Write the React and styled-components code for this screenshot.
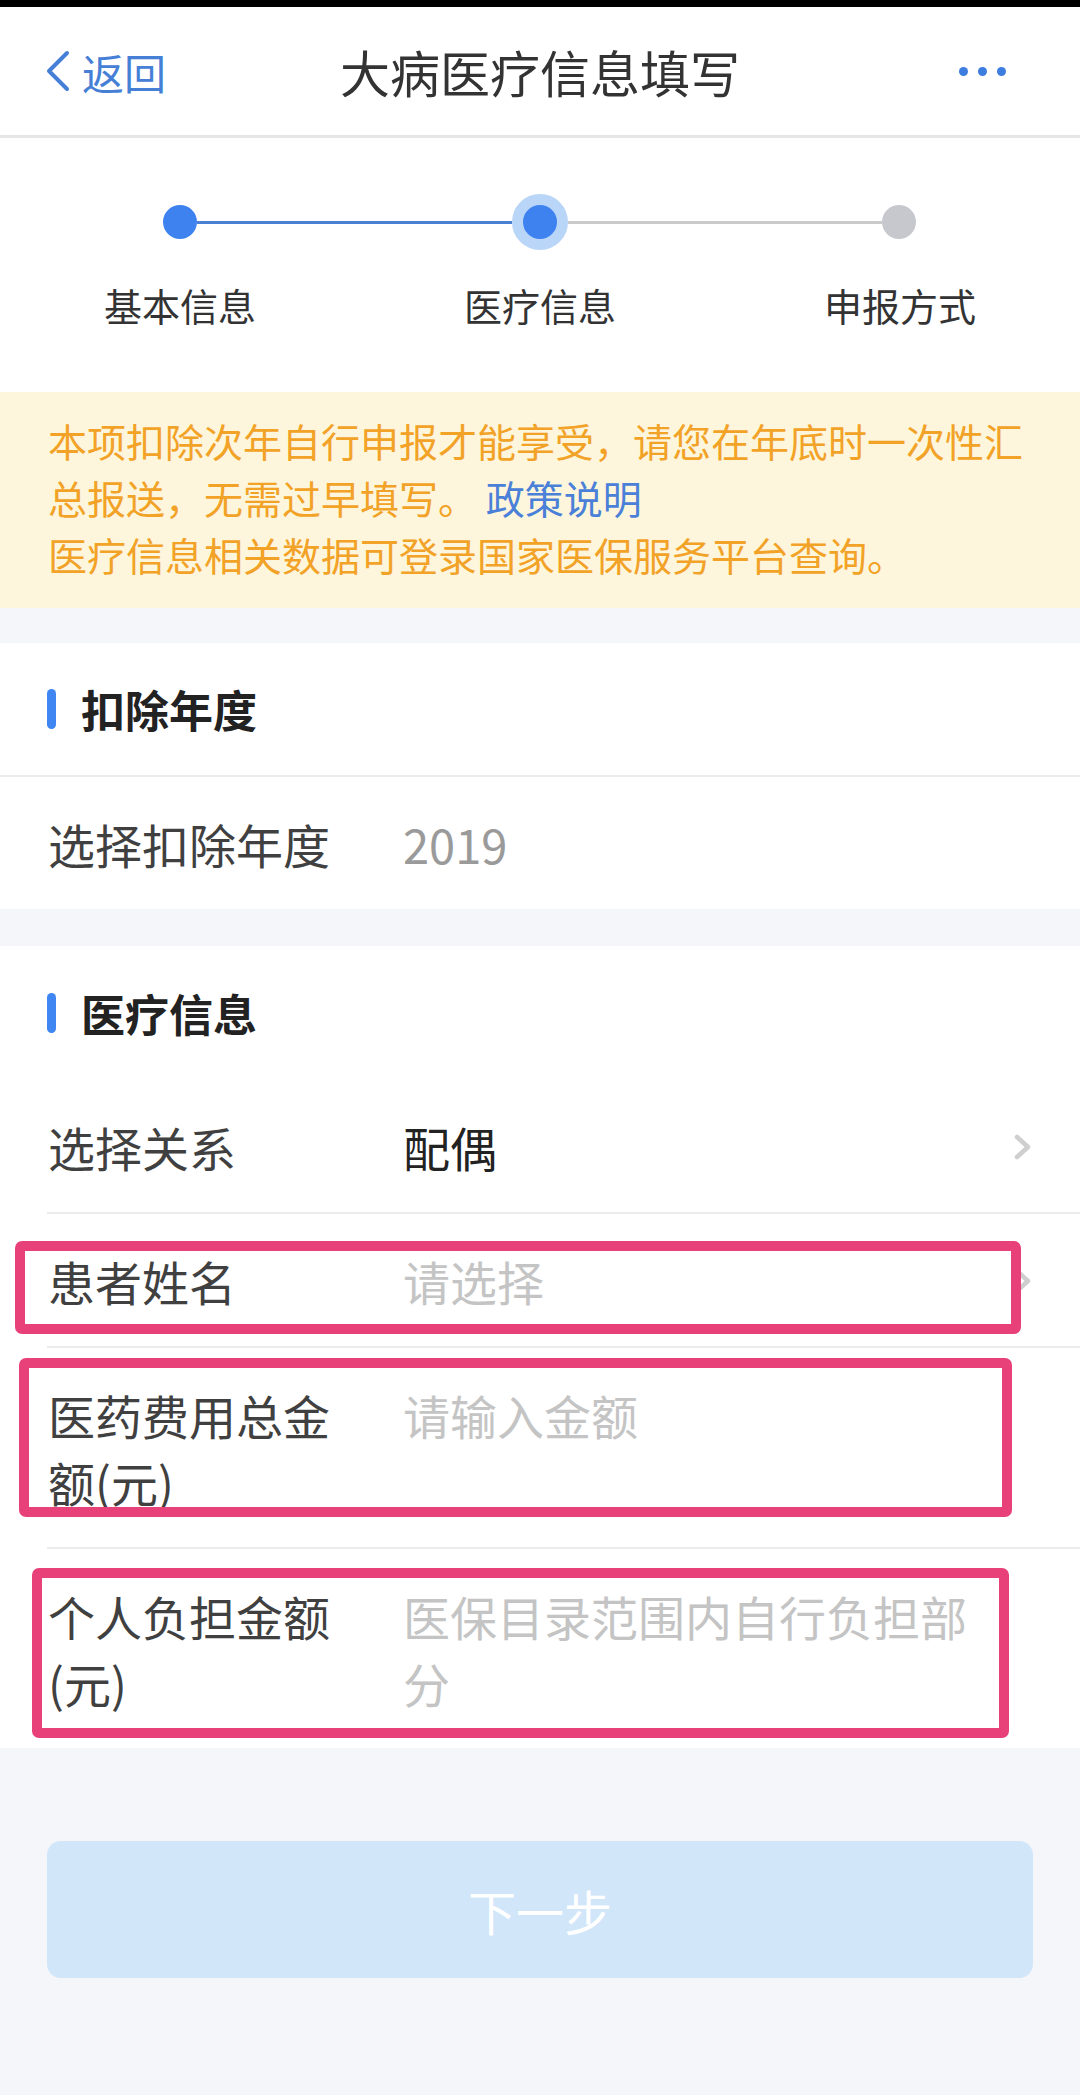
import styled, { createGlobalStyle } from 'styled-components';

const GlobalStyle = createGlobalStyle`
    body {
        margin: 0;
        background: #f4f6fa;
        font-family: "Noto Sans CJK SC", "Noto Sans", sans-serif;
    }
`;

const Page = styled.div`
    width: 1080px;
    min-height: 2095px;
    background: #f4f6fa;
`;

const StatusStrip = styled.div`
    height: 7px;
    background: #000;
`;

const NavBar = styled.div`
    display: grid;
    grid-template-columns: 1fr auto 1fr;
    align-items: center;
    height: 128px;
    background: #fff;
    border-bottom: 3px solid #e6e6e6;
`;

const BackLink = styled.div`
    display: flex;
    align-items: center;
    gap: 11px;
    padding-left: 45px;
    color: #4680d6;
    font-size: 42px;
`;

const Title = styled.div`
    font-size: 50px;
    color: #333;
`;

const MoreDots = styled.div`
    justify-self: end;
    display: flex;
    gap: 10px;
    padding-right: 74px;
`;

const Dot = styled.span`
    width: 9px;
    height: 9px;
    border-radius: 50%;
    background: #3d7de0;
`;

const Steps = styled.div`
    background: #fff;
    padding: 56px 0 63px;
`;

const Track = styled.div`
    display: flex;
    align-items: center;
    padding: 0 164px 0 163px;
`;

const StepDot = styled.span`
    width: 34px;
    height: 34px;
    border-radius: 50%;
    background: ${(props) => (props.done ? '#3e82f0' : '#c6c8ce')};
`;

const ActiveDot = styled.span`
    box-sizing: border-box;
    width: 56px;
    height: 56px;
    border-radius: 50%;
    border: 11px solid #b9d6f8;
    background: #3e82f0;
`;

const Connector = styled.span`
    flex: 1;
    height: 3px;
    background: ${(props) => (props.done ? '#4a80d4' : '#cbcbcb')};
`;

const StepLabels = styled.div`
    display: grid;
    grid-template-columns: repeat(3, 1fr);
    margin-top: 30px;
    text-align: center;
    font-size: 38px;
    line-height: 49px;
    color: #333;
`;

const Notice = styled.div`
    background: #fdf6dc;
    padding: 20px 48px 25px;
    font-size: 39px;
    line-height: 57px;
    color: #f2a227;
`;

const PolicyLink = styled.span`
    color: #4a80d8;
`;

const Section = styled.div`
    background: #fff;
    margin-top: ${(props) => props.gap}px;
`;

const SectionHeader = styled.div`
    display: flex;
    align-items: center;
    gap: 25px;
    height: ${(props) => (props.divided ? 132 : 134)}px;
    padding-left: 47px;
    border-bottom: ${(props) => (props.divided ? '2px solid #ececec' : 'none')};
    font-size: 44px;
    font-weight: bold;
    color: #222;
`;

const Bar = styled.span`
    width: 9px;
    height: 40px;
    border-radius: 5px;
    background: #3f86f2;
`;

const Row = styled.div`
    position: relative;
    display: grid;
    grid-template-columns: 300px 1fr 20px;
    align-items: start;
    margin-left: ${(props) => (props.flush ? 0 : 47)}px;
    padding: 33px 47px 32px ${(props) => (props.flush ? 48 : 1)}px;
    border-bottom: 2px solid #ececec;
    font-size: 47px;
    line-height: 67px;
    &:last-child {
        border-bottom: none;
    }
`;

const Label = styled.div`
    color: #404040;
`;

const Value = styled.div`
    margin: 0 14px 0 55px;
    color: ${(props) =>
        props.tone === 'placeholder' ? '#c4c4c4' : props.tone === 'muted' ? '#9a9a9a' : '#222'};
`;

const Chevron = styled.svg`
    align-self: center;
`;

const Highlight = styled.div`
    position: absolute;
    top: ${(props) => props.t}px;
    bottom: ${(props) => props.b}px;
    left: ${(props) => props.l}px;
    right: ${(props) => props.r}px;
    border: 10px solid #e8417a;
    border-radius: 7px;
    pointer-events: none;
`;

const NextButton = styled.div`
    display: flex;
    align-items: center;
    justify-content: center;
    height: 137px;
    margin: 93px 47px 0;
    border-radius: 14px;
    background: #d2e6fa;
    color: #fff;
    font-size: 48px;
`;

const Arrow = () => (
    <Chevron width="20" height="28" viewBox="0 0 20 28">
        <polyline points="4,4 15,14 4,24" fill="none" stroke="#cfcfcf" strokeWidth="4.5" strokeLinecap="round" strokeLinejoin="round" />
    </Chevron>
);

const App = () => (
    <Page>
        <GlobalStyle />
        <StatusStrip />
        <NavBar>
            <BackLink>
                <svg width="26" height="42" viewBox="0 0 26 42">
                    <polyline points="22,3 4,21 22,39" fill="none" stroke="#4680d6" strokeWidth="4" strokeLinecap="round" strokeLinejoin="round" />
                </svg>
                返回
            </BackLink>
            <Title>大病医疗信息填写</Title>
            <MoreDots>
                <Dot />
                <Dot />
                <Dot />
            </MoreDots>
        </NavBar>

        <Steps>
            <Track>
                <StepDot done />
                <Connector done />
                <ActiveDot />
                <Connector />
                <StepDot />
            </Track>
            <StepLabels>
                <span>基本信息</span>
                <span>医疗信息</span>
                <span>申报方式</span>
            </StepLabels>
        </Steps>

        <Notice>
            本项扣除次年自行申报才能享受，请您在年底时一次性汇总报送，无需过早填写。 <PolicyLink>政策说明</PolicyLink>
            <br />
            医疗信息相关数据可登录国家医保服务平台查询。
        </Notice>

        <Section gap={35}>
            <SectionHeader divided>
                <Bar />
                扣除年度
            </SectionHeader>
            <Row flush>
                <Label>选择扣除年度</Label>
                <Value tone="muted">2019</Value>
            </Row>
        </Section>

        <Section gap={37}>
            <SectionHeader>
                <Bar />
                医疗信息
            </SectionHeader>
            <Row>
                <Label>选择关系</Label>
                <Value>配偶</Value>
                <Arrow />
            </Row>
            <Row>
                <Label>患者姓名</Label>
                <Value tone="placeholder">请选择</Value>
                <Arrow />
                <Highlight t={27} b={12} l={-32} r={59} />
            </Row>
            <Row>
                <Label>医药费用总金额(元)</Label>
                <Value tone="placeholder">请输入金额</Value>
                <span />
                <Highlight t={10} b={30} l={-28} r={68} />
            </Row>
            <Row>
                <Label>个人负担金额(元)</Label>
                <Value tone="placeholder">医保目录范围内自行负担部分</Value>
                <span />
                <Highlight t={19} b={10} l={-15} r={71} />
            </Row>
        </Section>

        <NextButton>下一步</NextButton>
    </Page>
);

export default App;
